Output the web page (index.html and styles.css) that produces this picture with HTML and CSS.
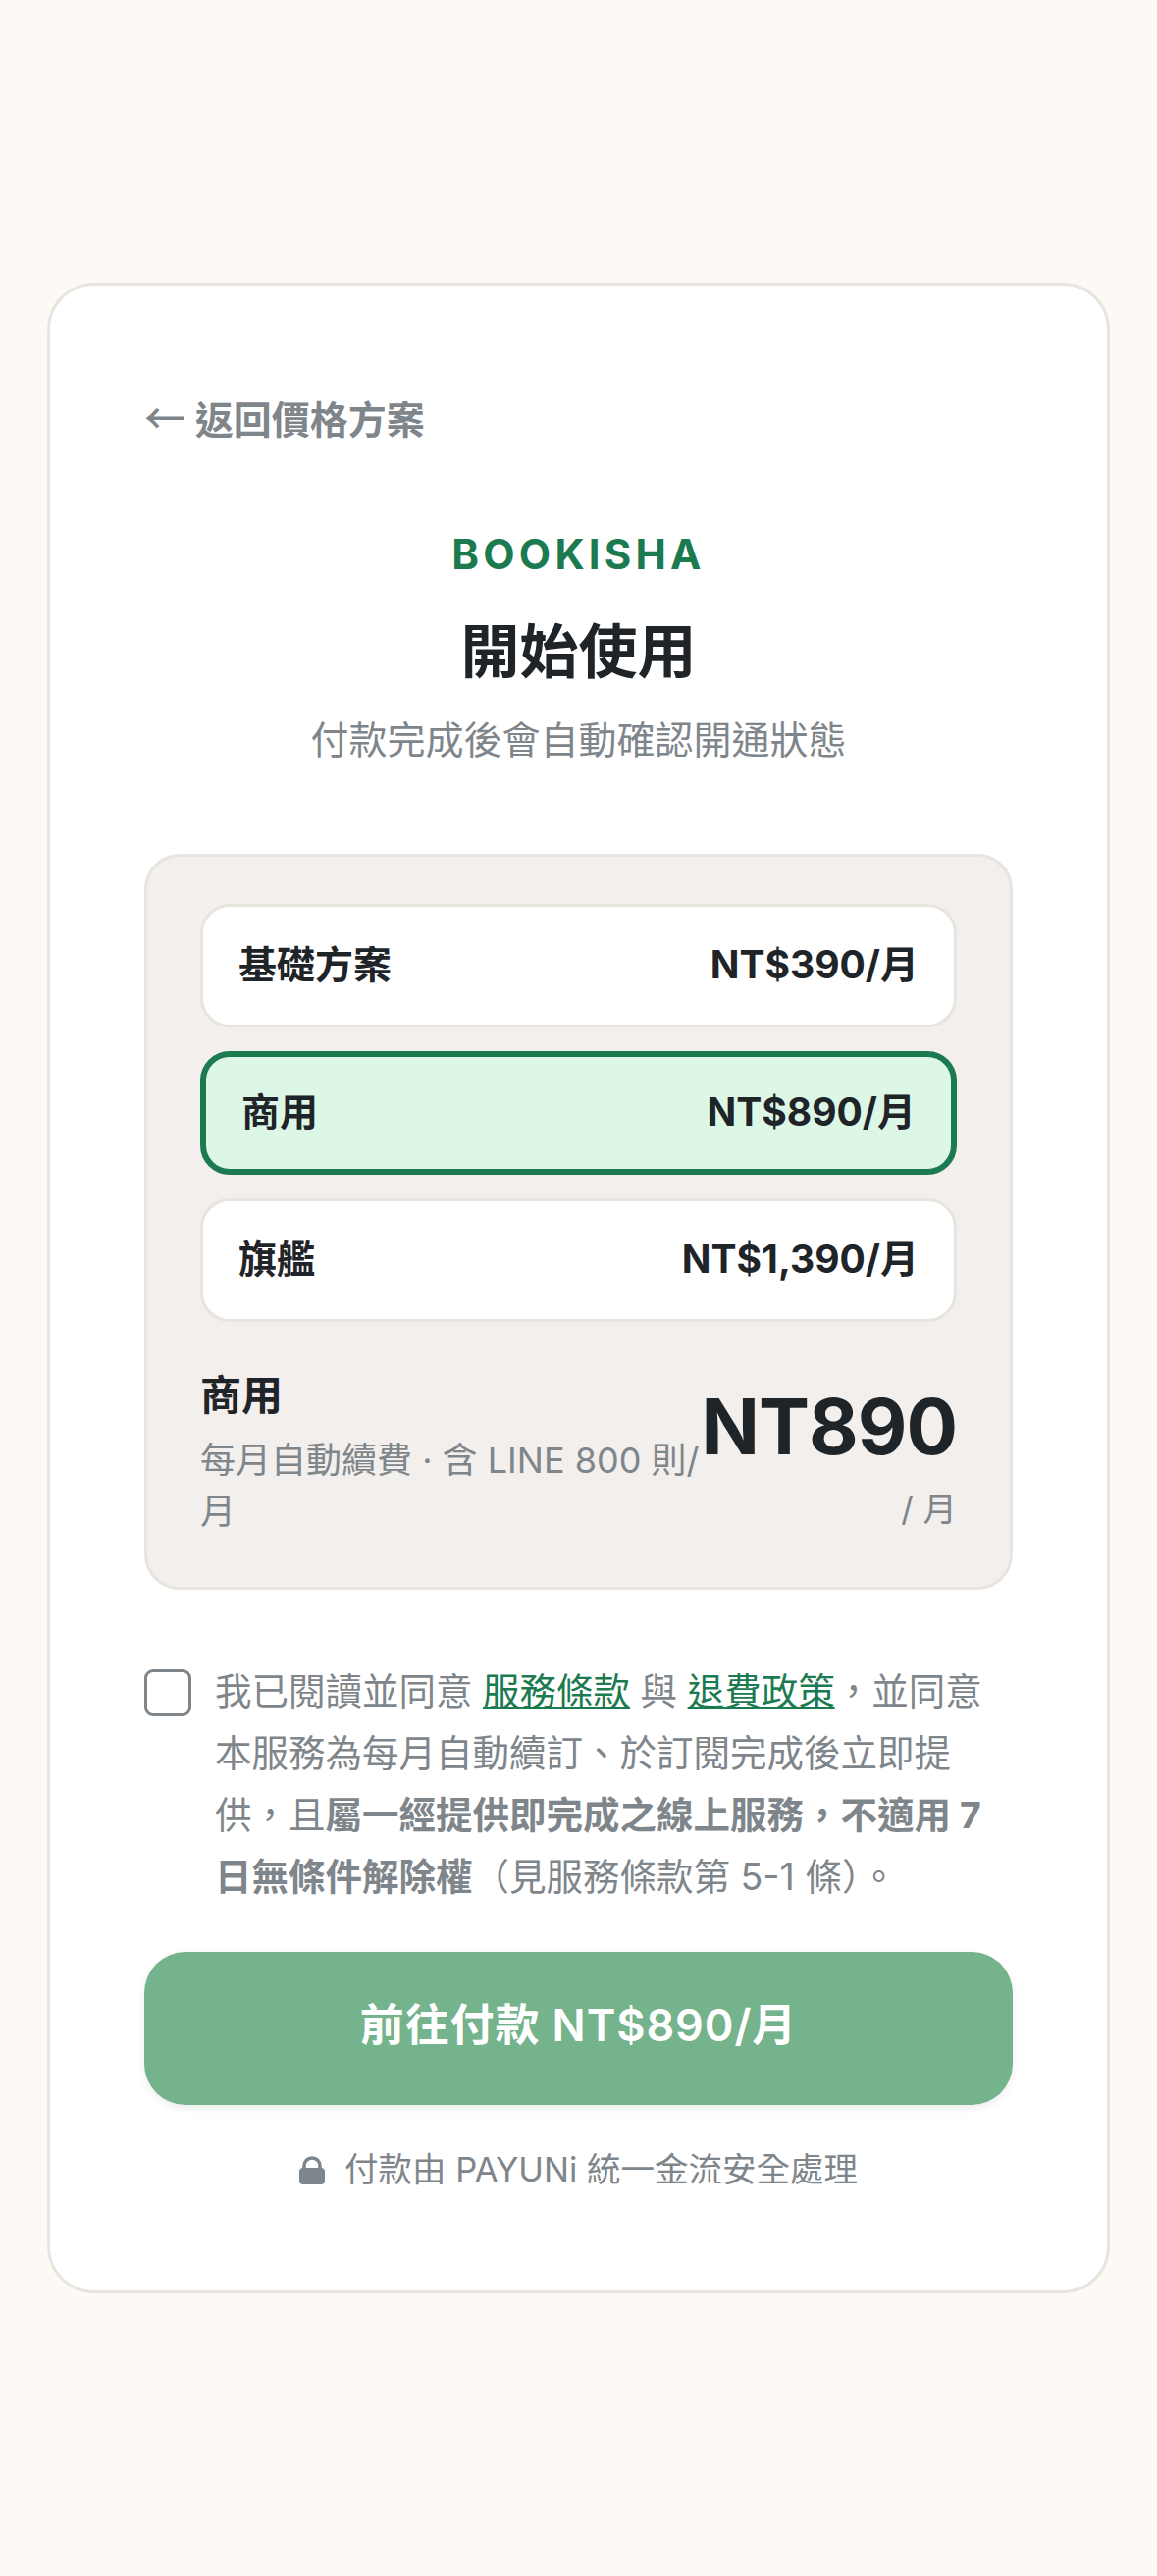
FILE: index.html
```html
<!DOCTYPE html>
<html lang="zh-Hant">
<head>
    <meta charset="UTF-8">
    <meta name="viewport" content="width=device-width, initial-scale=1.0">
    <title>開始使用</title>
    <link rel="stylesheet" href="styles.css">
</head>
<body>
    <main class="card">
        <a class="back" href="#"><span class="arrow">←</span> 返回價格方案</a>

        <header class="head">
            <div class="brand">BOOKISHA</div>
            <h1>開始使用</h1>
            <p class="sub">付款完成後會自動確認開通狀態</p>
        </header>

        <section class="panel">
            <ul class="plans">
                <li class="plan"><span>基礎方案</span><span class="price">NT$390/月</span></li>
                <li class="plan active"><span>商用</span><span class="price">NT$890/月</span></li>
                <li class="plan"><span>旗艦</span><span class="price">NT$1,390/月</span></li>
            </ul>
            <div class="summary">
                <div class="info">
                    <h2>商用</h2>
                    <p>每月自動續費 · 含 LINE 800 則/月</p>
                </div>
                <div class="total">
                    <strong>NT890</strong>
                    <span>/ 月</span>
                </div>
            </div>
        </section>

        <label class="terms">
            <input type="checkbox">
            <span>我已閱讀並同意 <a href="#">服務條款</a> 與 <a href="#">退費政策</a>，並同意本服務為每月自動續訂、於訂閱完成後立即提供，且<b>屬一經提供即完成之線上服務，不適用 7 日無條件解除權</b>（見服務條款第 5-1 條）。</span>
        </label>

        <button class="pay" type="button">前往付款 NT$890/月</button>

        <p class="secure">
            <svg class="lock" viewBox="0 0 26 29" width="26" height="29"><path d="M5 13v-3a8 8 0 0 1 16 0v3" fill="none" stroke="#7f868b" stroke-width="3.6"/><rect x="0" y="12" width="26" height="17" rx="4" fill="#7f868b"/></svg>
            付款由 PAYUNi 統一金流安全處理
        </p>
    </main>
</body>
</html>
```

FILE: styles.css
```css
*{
    margin: 0;
    padding: 0;
    box-sizing: border-box;
}
a{
    text-decoration: none;
}
li{
    list-style: none;
}
body{
    min-height: 2625px;
    display: flex;
    align-items: center;
    justify-content: center;
    padding: 0 48px;
    background: #fdfaf6;
    font-family: Inter, "Noto Sans CJK TC", sans-serif;
    color: #1f2429;
}
.card{
    width: 100%;
    padding: 96px;
    background: #fff;
    border: 3px solid #e8e4df;
    border-radius: 48px;
}
.back{
    display: block;
    padding-top: 11px;
    font-size: 39px;
    line-height: 60px;
    font-weight: 600;
    color: #7f868b;
}
.arrow{
    font-family: "Noto Sans CJK TC", sans-serif;
    font-size: 42px;
    line-height: 0;
    font-weight: 500;
}
.head{
    margin-top: 77px;
    text-align: center;
}
.brand{
    font-size: 42px;
    line-height: 60px;
    font-weight: 700;
    letter-spacing: 4.2px;
    color: #1c7a50;
}
h1{
    margin-top: 27px;
    font-size: 60px;
    line-height: 84px;
    font-weight: 700;
}
.sub{
    margin-top: 18px;
    font-size: 39px;
    line-height: 60px;
    color: #7f868b;
}
.panel{
    margin-top: 86px;
    padding: 48px 54px 51px;
    background: #f2efec;
    border: 3px solid #e8e4df;
    border-radius: 36px;
}
.plans{
    display: flex;
    flex-direction: column;
    gap: 24px;
}
.plan{
    height: 126px;
    display: flex;
    align-items: center;
    justify-content: space-between;
    padding: 0 36px 3px;
    background: #fff;
    border: 3px solid #e8e4df;
    border-radius: 30px;
    font-size: 39px;
    line-height: 60px;
    font-weight: 600;
}
.plan .price{
    font-weight: 700;
}
.plan.active{
    background: #dcf7e6;
    border: 6px solid #1c7a50;
}
.summary{
    margin-top: 45px;
    display: flex;
    justify-content: space-between;
}
.info h2{
    margin-bottom: 10px;
    font-size: 42px;
    line-height: 60px;
    font-weight: 600;
}
.info p{
    font-size: 36px;
    line-height: 52px;
    color: #7f868b;
}
.total{
    flex-shrink: 0;
    padding-top: 14px;
    text-align: right;
}
.total strong{
    display: block;
    margin-bottom: 9px;
    font-size: 78px;
    line-height: 96px;
    font-weight: 700;
    letter-spacing: -1px;
}
.total span{
    display: block;
    font-size: 34.5px;
    line-height: 54px;
    color: #7f868b;
}
.terms{
    margin-top: 72px;
    display: flex;
    gap: 24px;
    font-size: 37.5px;
    line-height: 63px;
    color: #7f868b;
}
.terms input{
    appearance: none;
    flex-shrink: 0;
    width: 48px;
    height: 48px;
    margin-top: 9px;
    background: #fff;
    border: 3px solid #7f868b;
    border-radius: 9px;
}
.terms a{
    color: #1c7a50;
    text-decoration: underline;
}
.terms b{
    font-weight: 700;
}
.pay{
    display: block;
    width: 100%;
    height: 156px;
    margin-top: 45px;
    padding-bottom: 6px;
    background: #74b38b;
    border: none;
    border-radius: 42px;
    box-shadow: 0 3px 9px rgba(0, 0, 0, .08);
    font-family: inherit;
    font-size: 45px;
    line-height: 60px;
    font-weight: 600;
    letter-spacing: .9px;
    color: #fff;
}
.secure{
    margin-top: 39px;
    display: flex;
    align-items: center;
    justify-content: center;
    gap: 20px;
    font-size: 34.5px;
    line-height: 54px;
    color: #7f868b;
}
```
